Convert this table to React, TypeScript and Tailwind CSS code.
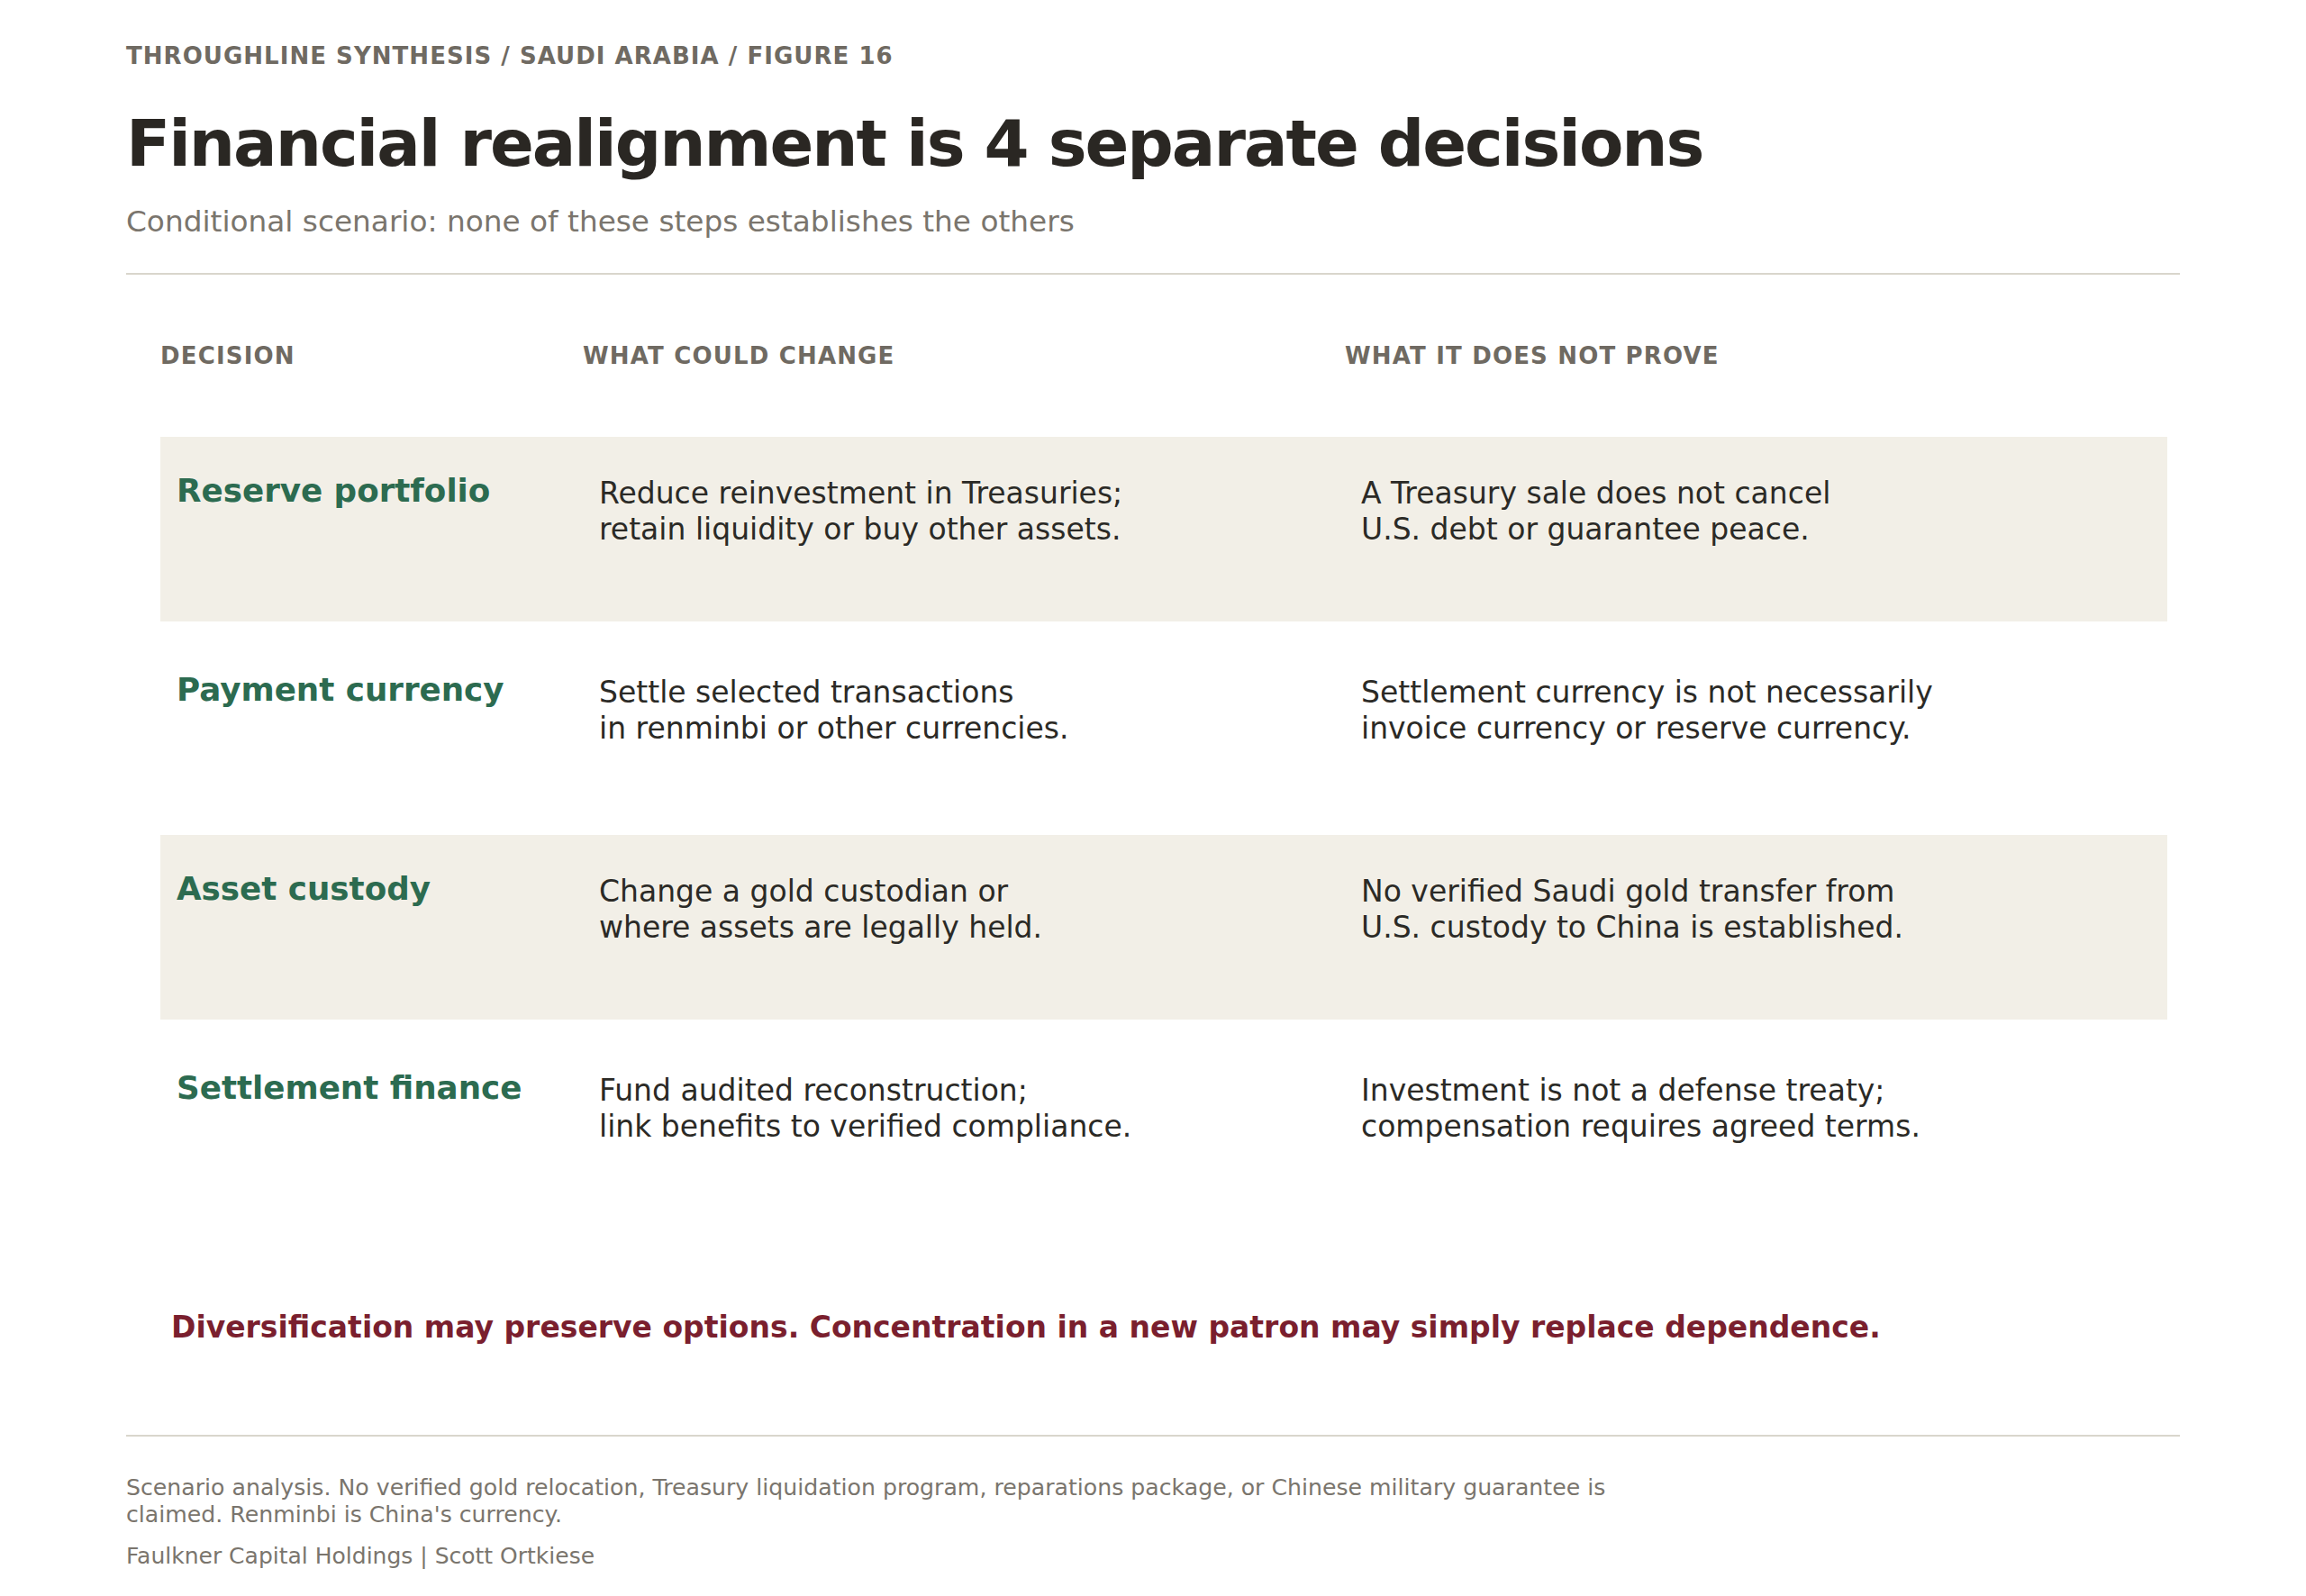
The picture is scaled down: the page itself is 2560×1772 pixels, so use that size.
import React from "react";

const rows = [
  {
    decision: "Reserve portfolio",
    change: ["Reduce reinvestment in Treasuries;", "retain liquidity or buy other assets."],
    notProve: ["A Treasury sale does not cancel", "U.S. debt or guarantee peace."],
    shaded: true,
  },
  {
    decision: "Payment currency",
    change: ["Settle selected transactions", "in renminbi or other currencies."],
    notProve: ["Settlement currency is not necessarily", "invoice currency or reserve currency."],
    shaded: false,
  },
  {
    decision: "Asset custody",
    change: ["Change a gold custodian or", "where assets are legally held."],
    notProve: ["No verified Saudi gold transfer from", "U.S. custody to China is established."],
    shaded: true,
  },
  {
    decision: "Settlement finance",
    change: ["Fund audited reconstruction;", "link benefits to verified compliance."],
    notProve: ["Investment is not a defense treaty;", "compensation requires agreed terms."],
    shaded: false,
  },
];

const Lines = ({ lines }: { lines: string[] }) => (
  <div className="pt-[3px] pl-[18px] text-[33px] leading-[40px] text-[#2b2a26]">
    {lines.map((l) => (
      <div key={l}>{l}</div>
    ))}
  </div>
);

export default function App() {
  return (
    <div className="min-h-screen bg-white font-['DejaVu_Sans',sans-serif]">
      <div className="px-[140px] pt-[46px]">
        <div className="text-[26px] leading-[32px] font-bold tracking-[0.04em] text-[#6f6a62]">
          THROUGHLINE SYNTHESIS / SAUDI ARABIA / FIGURE 16
        </div>
        <h1 className="mt-[41px] text-[72px] leading-[80px] font-bold tracking-[-0.028em] text-[#2a2723]">
          Financial realignment is 4 separate decisions
        </h1>
        <p className="mt-[27px] text-[32.75px] leading-[40px] text-[#7a756d]">
          Conditional scenario: none of these steps establishes the others
        </p>
        <div className="mt-[37px] h-[2px] bg-[#d9d6cc]" />

        <div className="ml-[38px] mr-[14px]">
          <div className="mt-[74px] grid grid-cols-[469px_846px_1fr] text-[26px] leading-[32px] font-bold tracking-[0.045em] text-[#6f6a62]">
            <div>DECISION</div>
            <div>WHAT COULD CHANGE</div>
            <div>WHAT IT DOES NOT PROVE</div>
          </div>

          <div className="mt-[74px] flex flex-col gap-[16px]">
            {rows.map((r) => (
              <div
                key={r.decision}
                className={`grid h-[205px] grid-cols-[469px_846px_1fr] items-start pt-[40px] ${
                  r.shaded ? "bg-[#f2efe7]" : "bg-white"
                }`}
              >
                <div className="pl-[18px] text-[35.7px] leading-[40px] font-bold text-[#2c6b50]">
                  {r.decision}
                </div>
                <Lines lines={r.change} />
                <Lines lines={r.notProve} />
              </div>
            ))}
          </div>
        </div>

        <div className="mt-[101px] pl-[50px] text-[33px] leading-[40px] font-bold text-[#7a1f2e]">
          Diversification may preserve options. Concentration in a new patron may simply replace dependence.
        </div>

        <div className="mt-[99px] h-[2px] bg-[#d9d6cc]" />

        <div className="mt-[42px] max-w-[1700px] text-[25.2px] leading-[30px] text-[#7a756d]">
          Scenario analysis. No verified gold relocation, Treasury liquidation program, reparations package, or
          Chinese military guarantee is claimed. Renminbi is China's currency.
        </div>
        <div className="mt-[16px] text-[25px] leading-[30px] text-[#7a756d]">
          Faulkner Capital Holdings | Scott Ortkiese
        </div>
      </div>
    </div>
  );
}
